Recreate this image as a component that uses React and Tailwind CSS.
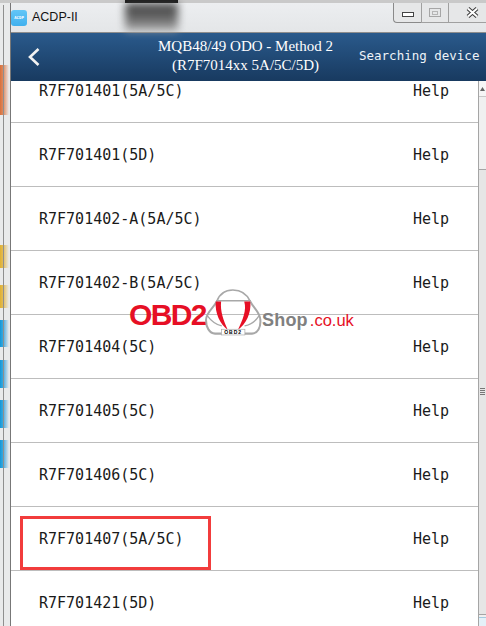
import React from "react";

const rows = [
  "R7F701401(5A/5C)",
  "R7F701401(5D)",
  "R7F701402-A(5A/5C)",
  "R7F701402-B(5A/5C)",
  "R7F701404(5C)",
  "R7F701405(5C)",
  "R7F701406(5C)",
  "R7F701407(5A/5C)",
  "R7F701421(5D)",
];

function Logo() {
  return (
    <div className="absolute left-[129px] top-[289px] flex items-start [font-family:'Liberation_Sans',sans-serif]">
      <span className="mt-[8px] w-[76px] text-[30px] leading-[36px] font-bold tracking-[-1.6px] text-[#e60f25]">OBD2</span>
      <svg width="57" height="47" viewBox="255 58 170 140" fill="none" className="shrink-0">
        <path d="M290 95 C300 68 320 61 338 61 C358 61 378 68 390 95" stroke="#a8a8a8" strokeWidth="5" />
        <path d="M288 93 H392" stroke="#a8a8a8" strokeWidth="4" />
        <path d="M290 95 C280 115 258 128 258 150 C258 172 268 190 285 191 H395 C412 190 422 172 420 150 C420 128 400 115 390 95" stroke="#a8a8a8" strokeWidth="6" />
        <path d="M262 138 C275 155 290 165 305 168 M416 138 C405 155 390 165 373 168" stroke="#a8a8a8" strokeWidth="4" />
        <path d="M287 95 C284 130 300 162 323 180 C310 150 300 125 303 95 Z" fill="#e60f25" />
        <path d="M390 95 C394 130 377 162 353 180 C367 150 380 122 372 95 Z" fill="#e60f25" />
        <rect x="304" y="178" width="70" height="17" fill="#fff" stroke="#a8a8a8" strokeWidth="2" />
        <text x="339" y="192" textAnchor="middle" fontSize="15" fontWeight="700" letterSpacing="3" fill="#000">OBD2</text>
      </svg>
      <span className="mt-[21px] text-[18px] leading-[20px] font-bold tracking-[0.2px] text-[#808080]">Shop</span>
      <span className="mt-[21px] ml-[2px] text-[16.5px] leading-[20px] text-[#e60f25]">.co.uk</span>
    </div>
  );
}

function Blob({ color, h, mt }) {
  return <div className={`w-[9px] bg-gradient-to-r via-35% ${color} ${h} ${mt}`} />;
}

export default function App() {
  return (
    <div className="relative flex h-[626px] w-[486px] flex-col overflow-hidden bg-[#e8e9ea] [font-family:'DejaVu_Sans_Mono',monospace]">
      {/* desktop sliver above the window */}
      <div className="h-[3px] w-full shrink-0 bg-[#c9c9c9]">
        <div className="ml-[125px] h-full w-[53px] bg-[#1c1c1c]" />
      </div>

      <div className="flex min-h-0 flex-1">
        {/* translucent left window edge */}
        <div className="relative flex w-[11px] shrink-0 flex-col border-r border-[#777] bg-[#e9eaeb]">
          <Blob color="from-[#d9703a] via-[#dc8a60] to-[#e9eaeb]" h="h-[50px]" mt="mt-[62px]" />
          <Blob color="from-[#e0b030] via-[#e3bc56] to-[#e9eaeb]" h="h-[23px]" mt="mt-[130px]" />
          <Blob color="from-[#e0b030] via-[#e3bc56] to-[#e9eaeb]" h="h-[23px]" mt="mt-[17px]" />
          <Blob color="from-[#0c97d8] via-[#3aa9de] to-[#e9eaeb]" h="h-[27px]" mt="mt-[12px]" />
          <Blob color="from-[#0c97d8] via-[#3aa9de] to-[#e9eaeb]" h="h-[28px]" mt="mt-[13px]" />
          <Blob color="from-[#0c97d8] via-[#3aa9de] to-[#e9eaeb]" h="h-[28px]" mt="mt-[12px]" />
          <Blob color="from-[#0c97d8] via-[#3aa9de] to-[#e9eaeb]" h="h-[28px]" mt="mt-[12px]" />
          <div className="absolute top-[2px] bottom-0 left-[3px] w-px bg-[#8f8f8f]" />
        </div>

        <div className="flex min-w-0 flex-1 flex-col">
          {/* title bar */}
          <div className="flex h-[30px] shrink-0 items-start justify-between border-b border-[#8d8d8d] bg-gradient-to-b from-[#eceef0] to-[#e4e6e8]">
            <div className="flex h-[29px] items-center">
              <div className="flex h-[16px] w-[16px] items-center justify-center rounded-[3px] bg-gradient-to-b from-[#62c6f7] to-[#3fb0ee] font-bold text-white">
                <span className="text-[4px] leading-none">ACDP</span>
              </div>
              <span className="ml-[5px] text-[12.5px] text-[#111] [font-family:'Liberation_Sans',sans-serif]">ACDP-II</span>
            </div>
            <div className="flex h-[20px] items-stretch">
              <div className="flex w-[28px] items-center justify-center rounded-bl-[4px] border-b border-l border-[#8a8a8a] bg-[#e6e7e8]">
                <div className="mt-[4px] h-[5px] w-[12px] border border-[#444] bg-white" />
              </div>
              <div className="flex w-[27px] items-center justify-center border-b border-l border-[#a0a0a0] bg-[#e6e7e8]">
                <div className="flex h-[9px] w-[12px] items-center justify-center border border-[#a6a6a6]">
                  <div className="h-[4px] w-[6px] border border-[#b5b5b5]" />
                </div>
              </div>
              <div className="flex w-[38px] items-center border-b border-l border-[#a0a0a0] bg-[#e6e7e8] pl-[17px]">
                <svg width="13" height="11" viewBox="0 0 13 11" fill="none">
                  <path d="M2 1.5 L11 9.5 M11 1.5 L2 9.5" stroke="#3c3c3c" strokeWidth="4" />
                  <path d="M2 1.5 L11 9.5 M11 1.5 L2 9.5" stroke="#fff" strokeWidth="2" />
                </svg>
              </div>
            </div>
          </div>

          {/* app header */}
          <header className="flex h-[48px] shrink-0 items-center bg-gradient-to-b from-[#2a5a8c] to-[#183a60] text-white">
            <svg width="14" height="20" viewBox="0 0 14 20" fill="none" className="ml-[16px] shrink-0">
              <path d="M11.5 2 L3 10 L11.5 18" stroke="#f2f2f2" strokeWidth="2.6" />
            </svg>
            <div className="ml-[94px] w-[221px] shrink-0 pb-[2px] text-center text-[15px] leading-[19px] whitespace-nowrap [font-family:'Liberation_Serif',serif]">
              <div>MQB48/49 ODO - Method 2</div>
              <div>(R7F7014xx 5A/5C/5D)</div>
            </div>
            <span className="ml-[3px] pb-[2px] text-[12.5px] whitespace-nowrap text-[#eef3f8]">Searching device</span>
          </header>

          <div className="flex min-h-0 flex-1">
            {/* list, scrolled so the first row is cut off */}
            <div className="min-w-0 flex-1 overflow-hidden bg-white">
              <div className="-mt-[22px]">
                {rows.map((r) => (
                  <div key={r} className="flex h-[64px] items-center justify-between border-b border-[#bdbdbd] pt-[1px] pr-[29px] pl-[28px] text-[15px] text-[#1a1a1a]">
                    <span>{r}</span>
                    <span>Help</span>
                  </div>
                ))}
              </div>
            </div>

            {/* scrollbar */}
            <div className="flex w-[8px] shrink-0 flex-col border-l border-[#a5a5a5] bg-[#f0f0f0]">
              <div className="flex h-[16px] shrink-0 items-center justify-center border-b border-[#c8c8c8] bg-[#f6f6f6]">
                <svg width="5" height="4" viewBox="0 0 5 4"><path d="M2.5 0 L5 4 H0 Z" fill="#666" /></svg>
              </div>
              <div className="mt-[72px] flex h-[446px] shrink-0 flex-col items-center border-t border-b border-[#a5a5a5] bg-[#e6e6e6]">
                <div className="mt-[218px] flex flex-col gap-[1px]">
                  <div className="h-px w-[5px] bg-[#777]" />
                  <div className="h-px w-[5px] bg-[#777]" />
                  <div className="h-px w-[5px] bg-[#777]" />
                  <div className="h-px w-[5px] bg-[#777]" />
                </div>
              </div>
              <div className="mt-[2px] flex-1 border-t border-[#a5cbe0] bg-[#e4f1f8]" />
            </div>
          </div>
        </div>
      </div>

      {/* blurred dark shape showing through the glass title bar */}
      <div className="absolute top-[3px] left-[125px] h-[28px] w-[53px] bg-gradient-to-b from-[#333] via-[#555] to-[#aaa] opacity-90 blur-[4px]" />

      {/* annotation and watermark lying over the screenshot */}
      <div className="absolute top-[516px] left-[20px] h-[54px] w-[191px] border-[3px] border-[#f23c3c]" />
      <Logo />
    </div>
  );
}
